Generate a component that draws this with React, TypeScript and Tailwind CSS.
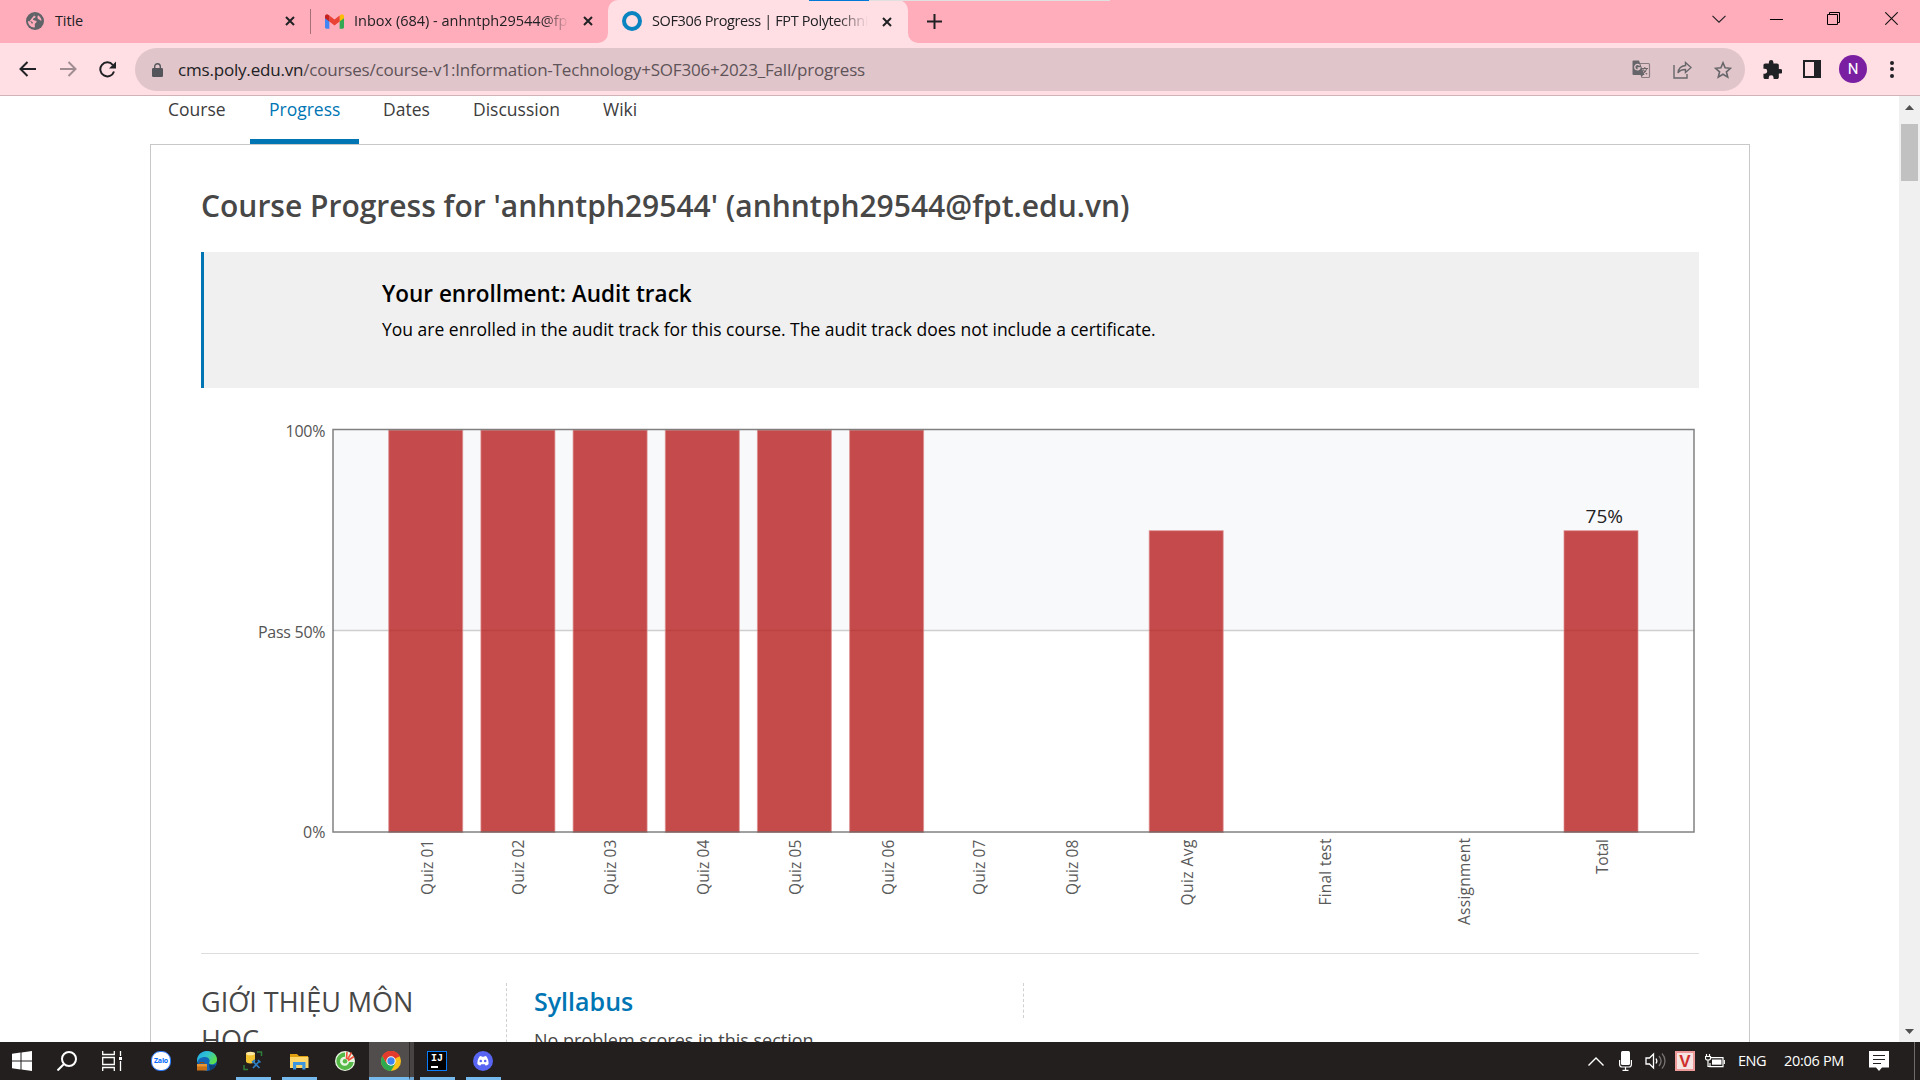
import React from "react";

const X = ({ className = "" }: { className?: string }) => (
  <svg className={className} width="10" height="10" viewBox="0 0 10 10" stroke="#202124" strokeWidth="2" fill="none">
    <path d="M1 1l8 8M9 1l-8 8" />
  </svg>
);

const bars = [
  { label: "Quiz 01", x: 388.7, base: 432.5, end: 894, top: 840, v: 100 },
  { label: "Quiz 02", x: 480.9, base: 524.3, end: 894, top: 840, v: 100 },
  { label: "Quiz 03", x: 573.1, base: 615.5, end: 894, top: 840, v: 100 },
  { label: "Quiz 04", x: 665.3, base: 708.5, end: 894, top: 840, v: 100 },
  { label: "Quiz 05", x: 757.4, base: 800.5, end: 894, top: 840, v: 100 },
  { label: "Quiz 06", x: 849.6, base: 893.5, end: 894, top: 840, v: 100 },
  { label: "Quiz 07", x: 941.8, base: 984.5, end: 894, top: 840, v: 0 },
  { label: "Quiz 08", x: 1034, base: 1077.5, end: 894, top: 840, v: 0 },
  { label: "Quiz Avg", x: 1149.2, base: 1192.5, end: 904.5, top: 840, v: 75 },
  { label: "Final test", x: 1287, base: 1330.5, end: 904.5, top: 839, v: 0 },
  { label: "Assignment", x: 1426, base: 1469.5, end: 924, top: 838.5, v: 0 },
  { label: "Total", x: 1564, base: 1607.5, end: 873, top: 839.5, v: 75 },
];

function GradeChart() {
  return (
    <svg className="block h-[553px] w-[1498px]" viewBox="201 400 1498 553" fontFamily="'Open Sans', sans-serif">
      <rect x="333" y="430" width="1361" height="200.5" fill="#f8f9fb" />
      <path d="M333 630.5H1694" stroke="#cfcfcf" strokeWidth="1.4" />
      {bars.map((b) =>
        b.v > 0 ? (
          <rect key={b.label} x={b.x} y={832 - (b.v * 402.4) / 100 + 0.5} width="74" height={(b.v * 402.4) / 100} fill="#b72121" fillOpacity="0.81" stroke="#e08f8f" strokeWidth="1" strokeOpacity="0.7" />
        ) : null,
      )}
      <rect x="333" y="429.5" width="1361" height="402.5" fill="none" stroke="#6b6b6b" strokeOpacity="0.85" strokeWidth="1.5" />
      <g fill="#545454" fontSize="16" textAnchor="end">
        <text x="325.5" y="437" textLength="40">100%</text>
        <text x="325.5" y="638" textLength="67.5">Pass 50%</text>
        <text x="325.5" y="838" textLength="22.5">0%</text>
      </g>
      <text x="1585.5" y="523" fill="#222" fontSize="19" textLength="37.5">75%</text>
      {bars.map((b) => (
        <text key={b.label} transform={`translate(${b.base} ${b.end + 1}) rotate(-90)`} fill="#5a5a5a" fontSize="15.5" textLength={b.end - b.top + 1.5}>
          {b.label}
        </text>
      ))}
    </svg>
  );
}

function TabStrip() {
  return (
    <div className="relative flex h-[43px] shrink-0 items-center bg-[#ffadbb] pb-px text-[14.5px] text-[#202124]">
      <svg className="ml-[26px] shrink-0" width="18" height="18" viewBox="0 0 18 18">
        <circle cx="9" cy="9" r="9" fill="#5f6368" />
        <path d="M9 2.200c-1.800.8-.6 2.100.6 2.200.2 1.700-2.600 1.300-2.600 3 0 1.200 2.800.6 3.400 1.700.8 1.500-1.400 2-1.600 3.200-.3 1.500.8 3.400-.6 3.300C4.700 15.200 2 12.400 2 9c2 .2 3.200.6 3.400 2 .2 1 1.300.8 1.400-.2.1-1.600-1.600-1.600-3.100-1.900M12 3.200c1.800 1 3.400 3.100 3.600 5.300-1.300.3-1.900-1-3.200-1.300-1.200-.5-1.200-2.600-.4-4z" fill="#ffadbb" />
      </svg>
      <span className="-mt-px ml-[11px] w-[230px] shrink-0 whitespace-nowrap tracking-[-0.125px]">Title</span>
      <X className="shrink-0" />
      <span className="ml-[15px] h-[25px] w-px shrink-0 bg-[#a3707a]" />
      <svg className="ml-[14px] shrink-0" width="19" height="15" viewBox="0 0 24 18">
        <path d="M0 3v13.400C0 17.300.7 18 1.600 18H5.500V7z" fill="#4285f4" />
        <path d="M24 3v13.400c0 .9-.7 1.600-1.600 1.600H18.500V7z" fill="#34a853" />
        <path d="M18.500 1.500V9L24 5V2.500C24 .2 21.300-.9 19.500.7z" fill="#fbbc04" />
        <path d="M5.500 9V1.500L12 6.400l6.500-4.900V9L12 14z" fill="#ea4335" />
        <path d="M0 2.500V5l5.500 4V1.500L4.500.7C2.700-.9 0 .2 0 2.500z" fill="#c5221f" />
      </svg>
      <span className="-mt-px ml-[10px] w-[215px] shrink-0 overflow-hidden whitespace-nowrap [mask-image:linear-gradient(to_right,black_88%,transparent)]">Inbox (684) - anhntph29544@fpt</span>
      <X className="ml-[14px] shrink-0" />
      <span className="relative -mb-px ml-[15px] flex h-[43px] w-[300px] shrink-0 items-center rounded-t-[10px] bg-[#ffdee4]">
        <svg className="absolute -left-[10px] bottom-0" width="10" height="10"><path d="M10 0v10H0A10 10 0 0 0 10 0z" fill="#ffdee4" /></svg>
        <svg className="absolute -right-[10px] bottom-0" width="10" height="10"><path d="M0 0v10h10A10 10 0 0 1 0 0z" fill="#ffdee4" /></svg>
        <span className="-mt-px ml-[14px] h-[20px] w-[20px] shrink-0 rounded-full border-[4px] border-[#0a84c1]" />
        <span className="-mt-[2px] ml-[10px] w-[216px] shrink-0 overflow-hidden whitespace-nowrap tracking-[-0.375px] [mask-image:linear-gradient(to_right,black_86%,transparent)]">SOF306 Progress | FPT Polytechni</span>
        <X className="ml-[14px] shrink-0" />
      </span>
      <svg className="ml-[19px] shrink-0" width="15" height="15" viewBox="0 0 15 15" stroke="#202124" strokeWidth="2"><path d="M7.500 0v15M0 7.500h15" /></svg>
      <span className="grow" />
      <svg className="mr-[44px] -mt-[4px]" width="14" height="8" viewBox="0 0 14 8" fill="none" stroke="#202124" strokeWidth="1.1"><path d="M.5.8L7 7.200 13.500.8" /></svg>
      <svg className="mr-[44px] -mt-[5px]" width="13" height="2"><path d="M0 1.500h13" stroke="#000" /></svg>
      <svg className="mr-[45px] -mt-[5px]" width="13" height="13" viewBox="0 0 13 13" fill="none" stroke="#000"><path d="M.5 2.500h10v10H.5zM2.500 2.500v-2h10v10h-2" /></svg>
      <svg className="mr-[22px] -mt-[5px]" width="13" height="13" viewBox="0 0 13 13" stroke="#111" strokeWidth="1.100"><path d="M.3.3l12.400 12.400M12.700.3L.3 12.700" /></svg>
      <div className="absolute left-[809px] top-0 flex h-px w-[301px] bg-[#e0e0e0]"><span className="w-[60px] bg-[#0078d7]" /></div>
    </div>
  );
}

function Toolbar() {
  return (
    <div className="flex h-[53px] shrink-0 items-center border-b border-[#cfb3b9] bg-[#ffdee4]">
      <svg className="ml-[19px]" width="17" height="16" viewBox="0 0 17 16" fill="none" stroke="#202124" strokeWidth="2"><path d="M17 8H2M8.500 1L1.500 8l7 7" /></svg>
      <svg className="ml-[24px]" width="17" height="16" viewBox="0 0 17 16" fill="none" stroke="#a08d92" strokeWidth="2"><path d="M0 8h15M8.500 1l7 7-7 7" /></svg>
      <svg className="ml-[22px]" width="18" height="17" viewBox="0 0 18 17"><path d="M15 10.500A7 7 0 1 1 13.800 4" fill="none" stroke="#202124" strokeWidth="2" /><path d="M17 .5V7.500H10z" fill="#202124" /></svg>
      <div className="ml-[18px] mt-px flex h-[43px] w-[1610px] items-center rounded-full bg-[#e0c5ca]">
        <svg className="ml-[17px]" width="11" height="14" viewBox="0 0 11 14"><rect y="5" width="11" height="9" rx="1.200" fill="#54555a" /><path d="M2.700 6V3.500a2.800 2.800 0 0 1 5.600 0V6" fill="none" stroke="#54555a" strokeWidth="1.400" /></svg>
        <span className="ml-[15px] whitespace-nowrap text-[17px] tracking-[-0.189px] text-[#5e5358]"><span className="text-[#202124]">cms.poly.edu.vn</span>/courses/course-v1:Information-Technology+SOF306+2023_Fall/progress</span>
        <span className="grow" />
        <svg className="mr-[22px]" width="19" height="19" viewBox="0 0 19 19"><path d="M6.500 3.500H16.500a1 1 0 0 1 1 1V16.500a1 1 0 0 1-1 1H9.500" fill="none" stroke="#8a7c80" strokeWidth="1.200" /><path d="M1.500 0.500H7L12.500 15H1.500a1 1 0 0 1-1-1V1.500a1 1 0 0 1 1-1z" fill="#66666a" /><path d="M8 13.500h4L9.500 17.500z" fill="#66666a" /><path d="M7.600 5.500A2.700 2.700 0 1 0 8 8H5.500" fill="none" stroke="#e0c5ca" strokeWidth="1.300" /><path d="M9.500 8.500H16M12.800 7v1.500M14.800 8.700c-.8 2.600-2 4-4 5.200M11.200 9.500c.9 2 2.300 3.500 4 4.700" fill="none" stroke="#6c6669" strokeWidth="1.100" /></svg>
        <svg className="mr-[22px]" width="19" height="18" viewBox="0 0 19 18" fill="none" stroke="#66666a" strokeWidth="1.400"><path d="M1 4v13h13v-4M12.500 1.500L18 6.500l-5.500 5V8.500C9 8.500 6.500 9.500 5 12c.3-4 3-7 7.500-7.500z" /></svg>
        <svg className="mr-[13px]" width="18" height="18" viewBox="0 0 18 18" fill="none" stroke="#66666a" strokeWidth="1.600"><path d="M9 1.800l2.100 5 5.400.5-4.100 3.500 1.300 5.300L9 13.200l-4.700 2.900 1.300-5.300L1.500 7.300l5.400-.5z" /></svg>
      </div>
      <svg className="ml-[18px]" width="19" height="19" viewBox="1.500 1 21 21" fill="#202124"><path d="M20.500 11H19V7c0-1.100-.9-2-2-2h-4V3.500a2.500 2.500 0 0 0-5 0V5H4c-1.100 0-2 .9-2 2v3.800h1.500a2.700 2.700 0 0 1 0 5.400H2V20c0 1.100.9 2 2 2h3.800v-1.500a2.700 2.700 0 0 1 5.400 0V22H17c1.100 0 2-.9 2-2v-4h1.500a2.500 2.500 0 0 0 0-5z" /></svg>
      <span className="ml-[21px] flex h-[18px] w-[18px] justify-end border-[2.500px] border-[#202124]"><span className="w-[5px] bg-[#202124]" /></span>
      <span className="ml-[18px] flex h-[28px] w-[28px] items-center justify-center rounded-full bg-[#7b1fa2] font-[Roboto] text-[15px] text-white">N</span>
      <span className="ml-[23px] flex flex-col gap-[2.500px]"><i className="h-[4px] w-[4px] rounded-full bg-[#202124]" /><i className="h-[4px] w-[4px] rounded-full bg-[#202124]" /><i className="h-[4px] w-[4px] rounded-full bg-[#202124]" /></span>
    </div>
  );
}

function CoursePage() {
  return (
    <div className="flex min-h-0 grow overflow-hidden bg-white">
      <div className="flex h-[946px] grow flex-col overflow-hidden pl-[150px]">
        <nav className="flex h-[48px] shrink-0 pl-[18px] text-[17.500px] leading-[26px] text-[#3c3c3c]">
          <span className="w-[82px] whitespace-nowrap">Course</span>
          <span className="h-[48px] w-[109px] border-b-[5px] border-[#0075b4] pl-[19px] text-[#0075b4]">Progress</span>
          <span className="ml-[24px] w-[90px] whitespace-nowrap">Dates</span>
          <span className="w-[130px] whitespace-nowrap">Discussion</span>
          <span className="whitespace-nowrap">Wiki</span>
        </nav>
        <main className="h-[898px] w-[1600px] shrink-0 overflow-hidden border border-b-0 border-[#c8c8c8] px-[50px]">
          <h1 className="mt-[41px] h-[66px] whitespace-nowrap text-[30px] font-semibold leading-[40px] text-[#474747]">Course Progress for 'anhntph29544' (anhntph29544@fpt.edu.vn)</h1>
          <section className="h-[136px] border-l-[3.500px] border-[#0075b4] bg-[#f0f0f0] pl-[178px] pt-[27px] text-black">
            <h2 className="whitespace-nowrap text-[22.500px] font-semibold leading-[30px]">Your enrollment: Audit track</h2>
            <p className="mt-[8px] whitespace-nowrap text-[17.500px] leading-[24px]">You are enrolled in the audit track for this course. The audit track does not include a certificate.</p>
          </section>
          <div className="h-[12px]" />
          <GradeChart />
          <div className="flex border-t border-[#dddddd] pt-[29px]">
            <h2 className="h-[80px] w-[306px] border-r border-dashed border-[#d0d0d0] text-[27px] leading-[38px] text-[#474747]">GIỚI THIỆU MÔN<br />HỌC</h2>
            <div className="w-[516px] pl-[27px]">
              <h3 className="text-[25px] font-semibold leading-[36px] text-[#0075b4]">Syllabus</h3>
              <p className="mt-[8px] text-[18px] leading-[26px] text-[#474747]">No problem scores in this section</p>
            </div>
            <div className="h-[35px] border-l border-dashed border-[#d0d0d0]" />
          </div>
        </main>
      </div>
      <div className="flex w-[21px] shrink-0 flex-col items-center bg-[#f0f0f0]">
        <svg className="mt-[9px]" width="9" height="5"><path d="M0 5L4.500 0 9 5z" fill="#505050" /></svg>
        <div className="mt-[14px] h-[57px] w-[17px] bg-[#c1c1c1]" />
        <svg className="mb-[8px] mt-auto" width="9" height="5"><path d="M0 0L4.500 5 9 0z" fill="#505050" /></svg>
      </div>
    </div>
  );
}

function Taskbar() {
  const slot = "flex h-[38px] items-center justify-center border-b-[3px] pt-[3px]";
  return (
    <div className="flex h-[38px] shrink-0 items-center bg-[#231f1e] text-white">
      <svg className="ml-[12px]" width="20" height="20" viewBox="0 0 20 20" fill="#fff"><path d="M0 2.800l8.500-1.200v8H0zM9.500 1.500L20 0v9.600H9.500zM0 10.500h8.500v8L0 17.300zM9.500 10.500H20V20L9.500 18.600z" /></svg>
      <svg className="ml-[25px]" width="20" height="20" viewBox="0 0 20 20" fill="none" stroke="#fff" strokeWidth="2"><circle cx="12" cy="8" r="7" /><path d="M7 13l-6.500 6.500" /></svg>
      <svg className="ml-[25px]" width="20" height="20" viewBox="0 0 20 20" fill="none" stroke="#fff" strokeWidth="1.300"><path d="M.7 0v3.500h11.600V0M.7 20v-3.500h11.600V20M.7 6.500h11.600v7H.7zM18.500 0v5M18.500 10v10" /><path d="M17 6h3v3h-3z" fill="#fff" stroke="none" /></svg>
      <span className="ml-[29px] flex h-[20px] w-[20px] items-center justify-center rounded-[9px] border border-[#2979ff] bg-white text-[7px] font-bold tracking-[-0.200px] text-[#0068ff]">Zalo</span>
      <svg className="ml-[26px]" width="20" height="20" viewBox="0 0 20 20">
        <defs><linearGradient id="edge" x1="0" y1="0" x2="1" y2="0.500"><stop offset="0" stopColor="#1fa7e8" /><stop offset="0.500" stopColor="#2fc3d2" /><stop offset="1" stopColor="#5be04d" /></linearGradient></defs>
        <circle cx="10" cy="10" r="10" fill="#1266b8" /><path d="M0 9C.5 3.500 4.800 0 10 0c6 0 10 4 10 8.500 0 3-2.500 4.800-5 4.800-2 0-3.500-.8-2.700-1.900C13.500 9.500 12 6 8 6 4 6 1 8 0 12z" fill="url(#edge)" /><path d="M12 13c2 1.500 5 1.500 7 .3-.8 2.300-3 5-6 6.200z" fill="#0f3f70" />
        <path d="M0 13h10v6.500H0z" fill="#c87018" /><path d="M0 13h10v2.500H0z" fill="#e89535" /><path d="M3 13v-1.500h4V13" fill="none" stroke="#8a4a10" strokeWidth="1" />
      </svg>
      <span className={`${slot} ml-[19px] w-[35px] border-[#76b9ed] pr-px`}>
        <svg width="20" height="20" viewBox="0 0 20 20"><path d="M14 1h4.500v4M1 14v4.500h4" fill="none" stroke="#2f7d3b" strokeWidth="1.500" /><path d="M3 2.500v8c0 2.500 9 2.500 9 0v-8z" fill="#f2c230" /><ellipse cx="7.500" cy="2.500" rx="4.500" ry="1.800" fill="#ffe9a0" /><path d="M10 10.500l6.500 6.500M16.500 10L10 17" stroke="#2d7ec4" strokeWidth="1.700" /><path d="M9 11.500l3-2.500M15 9l2.500 2.500" stroke="#2d7ec4" strokeWidth="1.700" /></svg>
      </span>
      <span className={`${slot} ml-[11px] w-[35px] border-[#76b9ed]`}>
        <svg width="19" height="17" viewBox="0 0 19 17"><path d="M0 1h7l2 2h9v6H0z" fill="#e0a010" /><path d="M0 4h18.500v11H0z" fill="#ffd768" /><path d="M3 16.500V9h12.500v7.500h-3.200V12H6.200v4.500z" fill="#3d96dd" /></svg>
      </span>
      <svg className="ml-[18px]" width="20" height="20" viewBox="0 0 20 20"><circle cx="10" cy="10" r="10" fill="#e9f6e4" /><path d="M10 1.500A8.700 8.700 0 1 0 18.700 11H14a4.500 4.500 0 1 1-4-5.200z" fill="#55b948" /><circle cx="10" cy="10.300" r="2.300" fill="#55b948" /><path d="M11.500 8L12 1M12.500 8.500L16.500 1.500M13 9.500l6-4" stroke="#f0513c" strokeWidth="1.600" /></svg>
      <span className="ml-[14px] flex">
        <span className={`${slot} w-[40px] border-[#76b9ed] bg-[#504d4c] pl-[4px]`}>
          <svg width="20" height="20" viewBox="0 0 20 20"><circle cx="10" cy="10" r="10" fill="#fbc116" /><path d="M10 10L1.340 5A10 10 0 0 1 18.660 5z" fill="#e33b2e" /><path d="M1.340 5A10 10 0 0 0 10 20l4.300-7.500L10 10 5.700 12.500z" fill="#2da94f" /><path d="M10 5.500h8.900A10 10 0 0 0 1.340 5l4.300 7.500z" fill="#e33b2e" /><circle cx="10" cy="10" r="4.700" fill="#fff" /><circle cx="10" cy="10" r="3.700" fill="#3f83f1" /></svg>
        </span>
        <span className="h-[38px] w-[5px] border-b-[3px] border-l border-b-[#6aa5d3] border-l-[#2c2928] bg-[#474443]" />
      </span>
      <span className={`${slot} ml-[6px] w-[35px] border-[#76b9ed] pr-px`}>
        <span className="flex h-[20px] w-[20px] flex-col border border-[#087cfa] bg-black pl-[3px] pt-[1px] font-['Liberation_Mono'] text-[10px] font-bold leading-[12px] text-white">IJ<i className="mt-[1px] h-[1.500px] w-[7px] bg-white" /></span>
      </span>
      <span className={`${slot} ml-[11px] w-[35px] border-[#76b9ed] pr-px`}>
        <svg width="20" height="20" viewBox="0 0 20 20"><circle cx="10" cy="10" r="10" fill="#5865f2" /><path d="M6.500 5.500C7.500 5 8.300 4.900 8.300 4.900l.4.800h2.600l.4-.8s.8.100 1.800.6c1.500 2 2.200 5 2.100 7.500-1 1-2.600 1.500-3 1.500l-.8-1.300H8.200L7.400 14.500c-.4 0-2-.5-3-1.500C4.300 10.500 5 7.500 6.500 5.500z" fill="#fff" /><circle cx="7.800" cy="10" r="1.300" fill="#5865f2" /><circle cx="12.200" cy="10" r="1.300" fill="#5865f2" /></svg>
      </span>
      <span className="grow" />
      <svg width="16" height="9" viewBox="0 0 16 9" fill="none" stroke="#fff" strokeWidth="1.400"><path d="M.5 8.500L8 1l7.500 7.500" /></svg>
      <svg className="ml-[15px]" width="13" height="20" viewBox="0 0 13 20"><rect x="2" width="9" height="14" rx="1.500" fill="#fff" /><path d="M.6 9v4.500c0 1.500 1 2.500 2.500 2.500h6.800c1.500 0 2.500-1 2.500-2.500V9M6.500 16v3M3.500 19.300h6" fill="none" stroke="#fff" strokeWidth="1.200" /></svg>
      <svg className="ml-[13px]" width="21" height="18" viewBox="0 0 21 18" fill="none" stroke="#fff" strokeWidth="1.300"><path d="M1 6h3.500L8.500 2v14L4.500 12H1z" /><path d="M11 6.500c1 1.500 1 3.500 0 5" /><path d="M14 4c2.500 3 2.500 7 0 10M17 1.500c4 4.500 4 10.500 0 15" stroke="#777473" /></svg>
      <span className="ml-[9px] flex h-[20px] w-[20px] items-center justify-center border-2 border-[#ef9a9a] bg-[#f5e4e2] font-['Liberation_Sans'] text-[17px] font-bold leading-none text-[#cf2f2b]">V</span>
      <svg className="ml-[10px]" width="20" height="14" viewBox="0 0 20 14" fill="none" stroke="#fff" strokeWidth="1.200"><path d="M5 3.600h13v9H5V9" /><path d="M7 5.500h9.500v5.200H7z" fill="#fff" stroke="none" /><path d="M19.300 6v4M1.500 0v2.500M4.500 0v2.500M.5 2.500h5v2c0 2-5 2-5 0zM3 6v6.500h2" /></svg>
      <span className="ml-[13px] w-[46px] whitespace-nowrap text-[14.500px] tracking-[-0.500px]">ENG</span>
      <span className="w-[85px] whitespace-nowrap text-[14.500px] tracking-[-0.300px]">20:06 PM</span>
      <svg width="20" height="20" viewBox="0 0 20 20"><path d="M0 0h20v16.500h-7L10 20l-3-3.500H0z" fill="#fff" /><path d="M4 4.500h12M4 8.500h12M4 12.500h8" stroke="#231f1e" strokeWidth="1.200" /></svg>
      <span className="ml-[25px] mr-[5px] h-[38px] w-px bg-[#6f6c6b]" />
    </div>
  );
}

export default function App() {
  return (
    <div className="flex h-[1080px] w-[1920px] flex-col overflow-hidden font-['Open_Sans',sans-serif]">
      <TabStrip />
      <Toolbar />
      <CoursePage />
      <Taskbar />
    </div>
  );
}
